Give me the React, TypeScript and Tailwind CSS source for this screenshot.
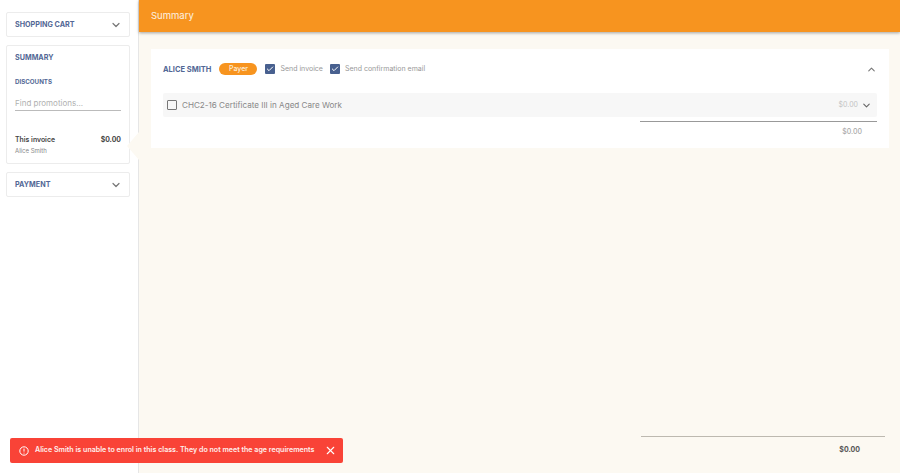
import React from 'react';
import { ChevronDown, ChevronUp, Check, X } from 'lucide-react';

const FONT = 'font-["Inter","Liberation_Sans",sans-serif]';

const CollapsedSection: React.FC<{ title: string }> = ({ title }) => (
    <div className="h-[25px] px-2 flex items-center justify-between bg-white border border-[#ececec] rounded-[2px]">
        <span className="mt-[1px] text-[7.2px] font-bold text-[#526795]">{title}</span>
        <ChevronDown className="w-3 h-3 mr-[-1px] text-[#777]" strokeWidth={2.4} />
    </div>
);

const BlueCheck = () => (
    <span className="w-[10px] h-[10px] flex items-center justify-center bg-[#48608f] rounded-[1px]">
        <Check className="w-[8px] h-[8px] text-white" strokeWidth={3} />
    </span>
);

const App: React.FC = () => {
    return (
        <div className={`relative w-[900px] h-[473px] flex overflow-hidden bg-white ${FONT}`}>
            {/* Sidebar */}
            <aside className="relative w-[139px] shrink-0 border-r border-[#e6e6e6] pt-3 pl-[6px] pr-2 flex flex-col gap-[8px]">
                <CollapsedSection title="SHOPPING CART" />
                <div className="h-[119px] px-2 pt-[7px] bg-white border border-[#ececec] rounded-[2px]">
                    <div className="text-[7.2px] font-bold text-[#526795] leading-[10px]">SUMMARY</div>
                    <div className="mt-[15px] text-[6.2px] font-bold text-[#526795] leading-[8px]">DISCOUNTS</div>
                    <div className="mt-[13px] pb-[3px] h-[12px] text-[8px] leading-[9px] text-[#b0b0b0] border-b border-[#bbb]">Find promotions...</div>
                    <div className="mt-[24px] flex justify-between text-[6.9px] font-semibold text-[#444] leading-[10px]">
                        <span>This invoice</span>
                        <span className="font-bold">$0.00</span>
                    </div>
                    <div className="mt-[2px] text-[6px] text-[#888] leading-[8px]">Alice Smith</div>
                </div>
                <CollapsedSection title="PAYMENT" />
                {/* notch pointing at the summary panel */}
                <span className="absolute right-[-1px] top-[132px] border-y-[14px] border-r-[12px] border-y-transparent border-r-[#fcf9f2]" />
            </aside>

            {/* Main */}
            <div className="flex-1 flex flex-col bg-[#fcf9f2] min-w-0">
                <header className="relative z-10 h-[32px] shrink-0 flex items-center pl-3 pt-[1px] bg-[#f7941f] shadow-[0_1px_3px_rgba(0,0,0,0.35)]">
                    <span className="text-[9.5px] text-[#fdf3e3]">Summary</span>
                </header>

                <main className="flex-1 flex flex-col pt-[17px] pl-3 pr-[11px]">
                    <section className="h-[99px] px-3 bg-white">
                        <div className="h-[44px] pb-[4px] flex items-center">
                            <span className="mt-[1px] text-[7.5px] font-bold text-[#526795]">ALICE SMITH</span>
                            <span className="ml-2 w-[38px] h-[12px] flex items-center justify-center rounded-full bg-[#f7941f] text-[7px] font-medium text-[#fdeeda]">Payer</span>
                            <span className="ml-2"><BlueCheck /></span>
                            <span className="ml-[5px] mt-[1px] text-[7px] text-[#999]">Send invoice</span>
                            <span className="ml-[7px]"><BlueCheck /></span>
                            <span className="ml-[5px] mt-[1px] text-[7px] text-[#999]">Send confirmation email</span>
                            <ChevronUp className="ml-auto w-[11px] h-[11px] text-[#777]" strokeWidth={2.4} />
                        </div>
                        <div className="h-[24px] flex items-center pl-1 pr-[5px] bg-[#f7f7f7] rounded-[2px]">
                            <span className="w-[10px] h-[10px] border border-[#777] rounded-[1px]" />
                            <span className="ml-[5px] text-[8.1px] text-[#888]">CHC2-16 Certificate III in Aged Care Work</span>
                            <span className="ml-auto text-[7px] text-[#c4c4c4]">$0.00</span>
                            <ChevronDown className="ml-[3px] w-[11px] h-[11px] text-[#666]" strokeWidth={2.4} />
                        </div>
                        <div className="mt-1 ml-[477px] border-t border-[#999]" />
                        <div className="mt-[5px] pr-[15px] text-right text-[7px] font-medium text-[#aaa]">$0.00</div>
                    </section>

                    <div className="mt-auto ml-[490px] mr-[4px] h-[37px] border-t border-[#bdb9b0]">
                        <div className="mt-[8px] pr-[25px] text-right text-[7px] font-bold text-[#555]">$0.00</div>
                    </div>
                </main>
            </div>

            {/* Toast */}
            <div className="absolute left-[10px] top-[438px] w-[333px] h-[25px] pl-[9px] pr-[6px] flex items-center bg-[#f94337] rounded-[2px] text-white">
                <svg className="w-[10px] h-[10px]" viewBox="0 0 10 10" fill="none" stroke="currentColor" strokeWidth="1">
                    <circle cx="5" cy="5" r="4.2" />
                    <path d="M5 2.6v3M5 6.7v.8" />
                </svg>
                <span className="ml-[6px] whitespace-nowrap text-[7.1px] font-semibold text-[#fff0ee]">Alice Smith is unable to enrol in this class. They do not meet the age requirements</span>
                <X className="ml-auto w-[13px] h-[13px]" strokeWidth={2} />
            </div>
        </div>
    );
};

export default App;
